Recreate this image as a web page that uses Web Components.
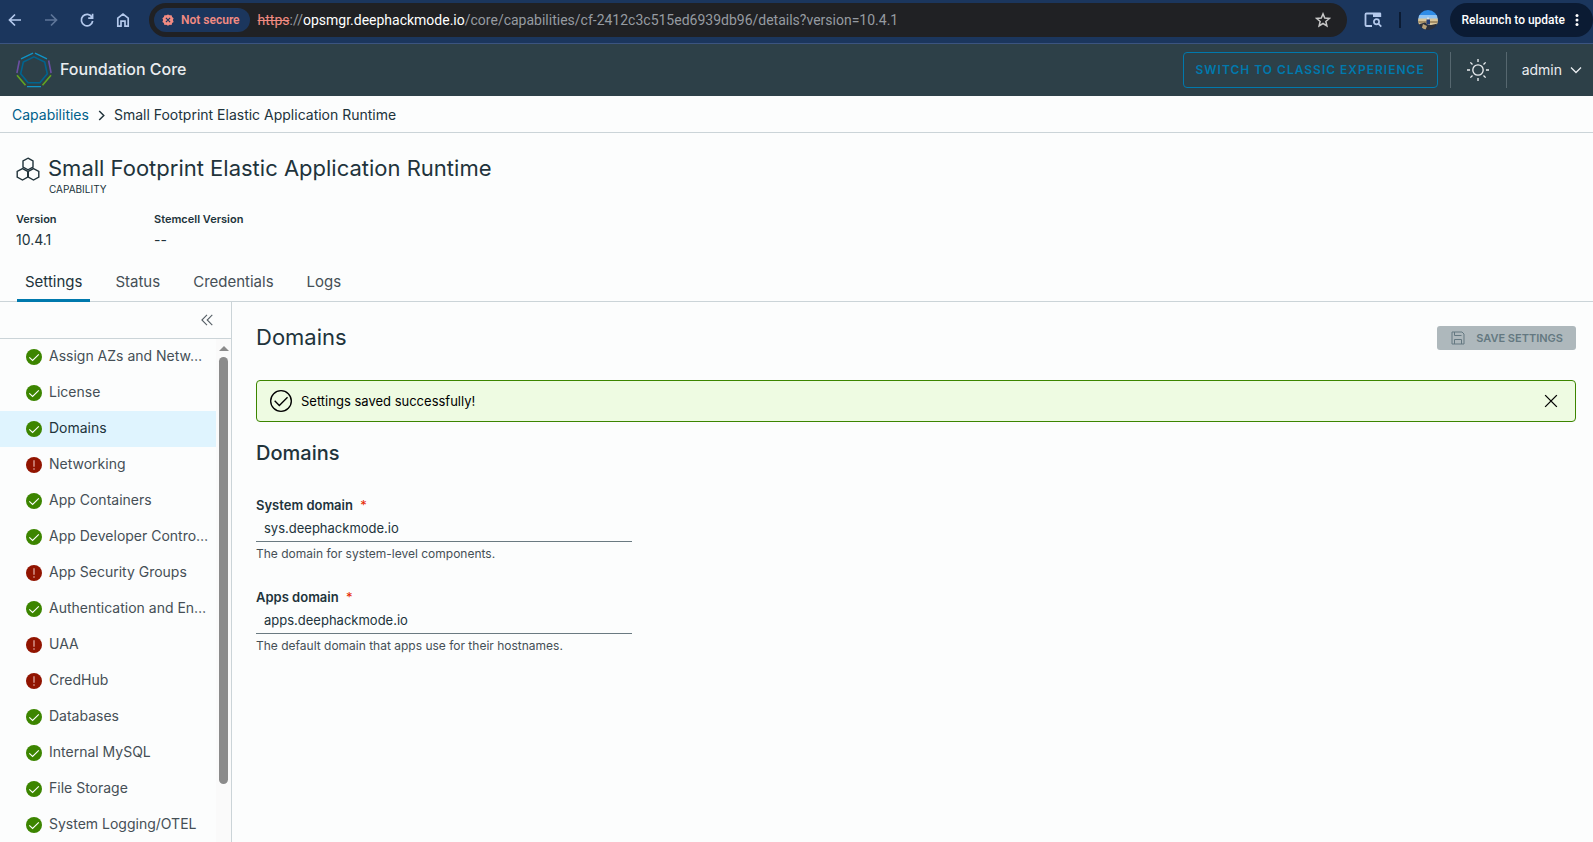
<!DOCTYPE html>
<html lang="en">
<head>
<meta charset="utf-8">
<title>Foundation Core</title>
<style>
  html, body {
    height: 100%;
  }
  body {
    margin: 0;
    overflow: hidden;
    background: #fcfdfd;
    color: #21333b;
    font: 14px/20px Inter, "Liberation Sans", sans-serif;
    --line: #cbd4d8;
    --blue: #0079ad;
    --muted: #454f56;
  }
</style>
</head>
<body>
<app-shell>
  <browser-bar slot="top"></browser-bar>
  <app-header slot="top" user="admin">Foundation Core</app-header>
  <crumb-trail slot="top" parent="Capabilities">Small Footprint Elastic Application Runtime</crumb-trail>
  <page-title slot="top" kind="CAPABILITY" version="10.4.1" stemcell="--">Small Footprint Elastic Application Runtime</page-title>
  <tab-bar slot="top" tabs="Settings,Status,Credentials,Logs" selected="Settings"></tab-bar>

  <side-nav slot="side">
    <nav-item status="ok">Assign AZs and Netw…</nav-item>
    <nav-item status="ok">License</nav-item>
    <nav-item status="ok" active>Domains</nav-item>
    <nav-item status="error">Networking</nav-item>
    <nav-item status="ok">App Containers</nav-item>
    <nav-item status="ok">App Developer Contro…</nav-item>
    <nav-item status="error">App Security Groups</nav-item>
    <nav-item status="ok">Authentication and En…</nav-item>
    <nav-item status="error">UAA</nav-item>
    <nav-item status="error">CredHub</nav-item>
    <nav-item status="ok">Databases</nav-item>
    <nav-item status="ok">Internal MySQL</nav-item>
    <nav-item status="ok">File Storage</nav-item>
    <nav-item status="ok">System Logging/OTEL</nav-item>
  </side-nav>

  <settings-form heading="Domains">
    <alert-box slot="alert">Settings saved successfully!</alert-box>
    <domain-field label="System domain" value="sys.deephackmode.io">The domain for system-level components.</domain-field>
    <domain-field label="Apps domain" value="apps.deephackmode.io">The default domain that apps use for their hostnames.</domain-field>
  </settings-form>
</app-shell>

<script>
const stroke = (d, width = 2) =>
  `<path d="${d}" fill="none" stroke="currentColor" stroke-width="${width}"/>`;

// name: [viewBox, markup]
const icons = {
  back: ["0 0 16 16", stroke("M14 8H3M8 2.5 2.5 8 8 13.5", 1.7)],
  forward: ["0 0 16 16", stroke("M2 8h11M8 2.5 13.5 8 8 13.5", 1.7)],
  reload: ["0 0 16 16", stroke("M13 5.2A5.7 5.7 0 1 0 13.7 9M13.6 1.8v4.4H9.2", 1.7)],
  home: ["0 0 16 16", stroke("M2.8 6.2 8 2l5.2 4.2V14.2H10V9.2H6v5H2.8Z", 1.7)],
  insecure: ["0 0 16 16", `<path fill="currentColor" d="m8 .5 2.200 1.300 2.600-.2.700 2.500 2 1.700-1 2.300 1 2.500-2 1.500-.7 2.500-2.600-.2L8 15.500l-2.200-1.100-2.600.2-.7-2.500-2-1.500 1-2.500-1-2.300 2-1.700.7-2.500 2.600.2z"/><path d="m5.200 5.200 5.600 5.600m0-5.600-5.600 5.600" stroke="#1b365d" stroke-width="1.600"/>`],
  star: ["0 0 16 16", stroke("m8 1.900 1.750 4.200 4.550.35-3.450 3 1.050 4.400L8 11.500l-3.900 2.350 1.050-4.400-3.450-3 4.550-.35Z", 1.5)],
  tabsearch: ["0 0 18 18", stroke("M8 15H2.500Q1.500 15 1.500 14V3.500Q1.500 2.500 2.500 2.500H9", 1.8) +
    `<path fill="currentColor" d="M9 1.600h7q1.200 0 1.200 1.200V6H9z"/><circle cx="12.500" cy="10.800" r="2.600" fill="none" stroke="currentColor" stroke-width="1.700"/>` + stroke("m14.300 12.600 3 3", 1.7)],
  dots: ["0 0 4 16", `<g fill="currentColor"><circle cx="2" cy="3.500" r="1.500"/><circle cx="2" cy="8" r="1.500"/><circle cx="2" cy="12.500" r="1.500"/></g>`],
  avatar: ["0 0 20 20", `<defs><clipPath id="c"><circle cx="10" cy="10" r="10"/></clipPath></defs>
    <g clip-path="url(#c)"><path fill="#2f8de8" d="M0 0h20v6H0z"/><path fill="#8fc4f4" d="M0 5h20v4H0z"/><path fill="#d9c59a" d="M0 8.500h20V15H0z"/>
    <path fill="#a58e66" d="M0 11h20v2H0z"/><path fill="#2b2f3a" d="M0 14.500l7-2 4 3 9-2v8H0z"/><path fill="#b8a078" d="m5 14 4 2-2 5H3z"/><path fill="#d6dfe8" d="M9 7.500h2v2H9z"/><path fill="#243d74" d="M8.500 9.500h3.500v5H8.500z"/></g>`],
  logo: ["0 0 36 36", `<g fill="none" stroke-width="1.300">
    <path stroke="#0f94c8" d="M5 6.800 17 1.200M19 1.200 31 6.800M11 34.600h14"/>
    <path stroke="#6b4fa3" stroke-width="1.600" d="M3.400 8.500.9 21M32.600 8.500 35.100 21"/>
    <path stroke="#62a420" stroke-width="1.600" d="m1 23.200 8.500 10M35 23.200l-8.500 10"/>
    <path stroke="#00648f" stroke-width="1.600" d="m18 4.900 10.700 5.200 2.600 11.700-7.400 9H12.100L4.700 21.800 7.300 10.100Z"/></g>`],
  sun: ["0 0 36 36", `<circle cx="18" cy="18" r="8.500" fill="none" stroke="currentColor" stroke-width="2.200"/>` +
    stroke("M18 0v5M18 31v5M0 18h5M31 18h5M5.500 5.500 9 9M27 27l3.500 3.500M5.500 30.500 9 27M27 9l3.500-3.500", 2.2)],
  down: ["0 0 12 12", stroke("M1 3.500 6 8.500 11 3.500", 1.3)],
  right: ["0 0 12 12", stroke("M3.500 1 8.500 6 3.500 11", 1.6)],
  collapse: ["0 0 12 12", stroke("M6 .8.900 6 6 11.200M11.300.8 6.200 6l5.100 5.200", 1.1)],
  tiles: ["0 0 24 24", stroke("M12 1.200 17 4v6l-5 2.800L7 10V4ZM6.500 11.600 11.700 14.500v5.600L6.500 23 1.200 20.100v-5.600ZM17.500 11.600l5.300 2.900v5.600L17.500 23l-5.200-2.900v-5.600Z", 1.4)],
  ok: ["0 0 16 16", `<circle cx="8" cy="8" r="8" fill="#3c8500"/><path d="m3.300 8.300 3.300 3.200 6.200-6.200" fill="none" stroke="#fff" stroke-width="1.100"/>`],
  error: ["0 0 16 16", `<circle cx="8" cy="8" r="8" fill="#911400"/><path d="M7.300 3.200h1.400v6.600H7.300zM7.300 11.300h1.400v1.400H7.300z" fill="#d89c92"/>`],
  check: ["0 0 36 36", `<circle cx="18" cy="18" r="15.500" fill="none" stroke="currentColor" stroke-width="2"/>` + stroke("m8.500 17.700 7 7L27.800 12.500")],
  close: ["0 0 16 16", stroke("M1.300 1.300 14.700 14.700M14.700 1.300 1.300 14.700", 1.5)],
  save: ["0 0 16 16", stroke("M2 2h10l2 2v10H2ZM4.500 14V9.500h7V14M4.500 2v3.500h7", 1)],
};

customElements.define(
  "app-icon",
  class AppIcon extends HTMLElement {
    connectedCallback() {
      const [box, markup] = icons[this.getAttribute("name")];
      const size = this.getAttribute("size") || 16;
      this.attachShadow({ mode: "open" }).innerHTML = `<style>
        :host { display: inline-block; flex: none; line-height: 0; }
        svg { display: block; height: ${size}px; }
      </style>
      <svg viewBox="${box}" aria-hidden="true">${markup}</svg>`;
    }
  }
);

const buttonReset = `
  button { font: inherit; color: inherit; background: none; border: 0; padding: 0; margin: 0; cursor: pointer; display: flex; align-items: center; justify-content: center; }
  * { box-sizing: border-box; }
`;

class BaseElement extends HTMLElement {
  connectedCallback() {
    this.attachShadow({ mode: "open" }).innerHTML = this.render();
  }
}

customElements.define(
  "app-shell",
  class AppShell extends BaseElement {
    render() {
      return `<style>
        :host { display: flex; flex-direction: column; height: 100vh; }
        .body { flex: 1; min-height: 0; display: grid; grid-template-columns: 232px 1fr; }
      </style>
      <slot name="top"></slot>
      <div class="body"><slot name="side"></slot><slot></slot></div>`;
    }
  }
);

customElements.define(
  "browser-bar",
  class BrowserBar extends BaseElement {
    render() {
      return `<style>${buttonReset}
        :host { display: flex; align-items: center; height: 44px; padding: 0 0 4px; box-sizing: border-box; background: #1b365d; border-bottom: 1px solid #3b5480; color: #b4c9ec; font-family: Roboto, sans-serif; }
        .nav { display: flex; gap: 20px; padding: 0 18px 0 7px; }
        .nav [disabled] { color: #5f7699; }
        .address { flex: 1; display: flex; align-items: center; height: 34px; padding: 0 16px 0 5px; border-radius: 17px; background: #202124; }
        .chip { height: 24px; padding: 0 10px 0 8px; gap: 7px; border-radius: 12px; background: #1b365d; color: #f28b82; font-size: 12px; font-weight: 600; }
        .url { flex: 1; margin-left: 8px; color: #969ba1; outline: 0; white-space: nowrap; }
        .url s { color: #f28b82; }
        .url b { color: #fff; font-weight: 400; }
        .star { color: #c7c7c7; }
        .tools { display: flex; align-items: center; padding: 0 12px 0 17px; gap: 17px; }
        hr { width: 2px; height: 16px; margin: 0; border: 0; background: #0b1b33; }
        .update { height: 34px; padding: 0 14px 0 12px; gap: 10px; border-radius: 17px; background: #0b1b33; color: #fff; font-size: 12px; font-weight: 500; }
      </style>
      <div class="nav">
        <button aria-label="Back"><app-icon name="back"></app-icon></button>
        <button aria-label="Forward" disabled><app-icon name="forward"></app-icon></button>
        <button aria-label="Reload"><app-icon name="reload"></app-icon></button>
        <button aria-label="Home"><app-icon name="home"></app-icon></button>
      </div>
      <div class="address">
        <button class="chip"><app-icon name="insecure" size="12"></app-icon>Not secure</button>
        <div class="url" role="textbox" aria-label="Address" contenteditable spellcheck="false"><s>https</s>://<b>opsmgr.deephackmode.io</b>/core/capabilities/cf-2412c3c515ed6939db96/details?version=10.4.1</div>
        <button class="star" aria-label="Bookmark"><app-icon name="star"></app-icon></button>
      </div>
      <div class="tools">
        <button aria-label="Search tabs"><app-icon name="tabsearch" size="18"></app-icon></button>
        <hr>
        <button aria-label="Profile"><app-icon name="avatar" size="20"></app-icon></button>
      </div>
      <button class="update">Relaunch to update<app-icon name="dots"></app-icon></button>`;
    }
  }
);

customElements.define(
  "app-header",
  class AppHeader extends BaseElement {
    render() {
      return `<style>${buttonReset}
        :host { display: flex; align-items: center; height: 52px; background: #2d4048; color: #eaedf0; }
        .brand { flex: 1; display: flex; align-items: center; gap: 8px; padding-left: 16px; font-size: 16px; font-weight: 500; }
        .brand span { padding-bottom: 2px; }
        .classic { height: 36px; padding: 0 12px; margin-right: 12px; border: 1px solid var(--blue); border-radius: 4px; color: var(--blue); font-size: 12px; font-weight: 600; letter-spacing: 1px; }
        .theme, .user { height: 36px; border-left: 1px solid #56676f; }
        .theme { width: 56px; }
        .user { padding: 0 11px 0 15px; gap: 8px; }
      </style>
      <div class="brand"><app-icon name="logo" size="36"></app-icon><span><slot></slot></span></div>
      <button class="classic">SWITCH TO CLASSIC EXPERIENCE</button>
      <button class="theme" aria-label="Theme"><app-icon name="sun" size="22"></app-icon></button>
      <button class="user">${this.getAttribute("user")}<app-icon name="down" size="12"></app-icon></button>`;
    }
  }
);

customElements.define(
  "crumb-trail",
  class CrumbTrail extends BaseElement {
    render() {
      return `<style>
        :host { display: flex; align-items: center; gap: 7px; height: 37px; padding: 2px 12px 0; box-sizing: border-box; border-bottom: 1px solid var(--line); }
        a { color: #00608a; text-decoration: none; }
      </style>
      <a href="#">${this.getAttribute("parent")}</a><app-icon name="right" size="11"></app-icon><slot></slot>`;
    }
  }
);

customElements.define(
  "page-title",
  class PageTitle extends BaseElement {
    render() {
      return `<style>
        :host { display: block; padding: 24px 16px 0; }
        .head { display: flex; gap: 8px; }
        h1 { margin: 0; padding-bottom: 2px; font-size: 22px; line-height: 22px; font-weight: 400; }
        .kind { padding-left: 1px; font-size: 10px; line-height: 16px; }
        dl { display: grid; grid-template-columns: 138px 1fr; margin: 12px 0 0; }
        dt { grid-row: 1; font-size: 11px; font-weight: 600; }
        dd { grid-row: 2; margin: 0; padding-bottom: 2px; line-height: 22px; }
      </style>
      <div class="head">
        <app-icon name="tiles" size="24"></app-icon>
        <div><h1><slot></slot></h1><div class="kind">${this.getAttribute("kind")}</div></div>
      </div>
      <dl>
        <dt>Version</dt><dd>${this.getAttribute("version")}</dd>
        <dt>Stemcell Version</dt><dd>${this.getAttribute("stemcell")}</dd>
      </dl>`;
    }
  }
);

customElements.define(
  "tab-bar",
  class TabBar extends BaseElement {
    render() {
      const selected = this.getAttribute("selected");
      const tabs = this.getAttribute("tabs").split(",");
      return `<style>${buttonReset}
        :host { display: flex; gap: 17px; padding: 10px 17px 0; border-bottom: 1px solid var(--line); color: var(--muted); font-size: 15px; }
        button { height: 39px; padding: 2px 8px 0; margin-bottom: -1px; border-bottom: 3px solid transparent; }
        [aria-selected="true"] { color: #21333b; border-bottom-color: var(--blue); }
      </style>
      ${tabs
        .map((t) => `<button role="tab" aria-selected="${t === selected}">${t}</button>`)
        .join("")}`;
    }
  }
);

customElements.define(
  "side-nav",
  class SideNav extends BaseElement {
    render() {
      return `<style>${buttonReset}
        :host { display: flex; flex-direction: column; min-height: 0; border-right: 1px solid var(--line); box-sizing: border-box; }
        .top { display: flex; justify-content: flex-end; height: 37px; flex: none; padding-right: 18px; border-bottom: 1px solid var(--line); color: #565f66; }
        .scroller { flex: 1; min-height: 0; display: grid; grid-template-columns: 1fr 15px; }
        nav { overflow: hidden; }
        .track { display: flex; flex-direction: column; align-items: center; background: #fafafa; padding-top: 7px; }
        .up { flex: none; border: 5px solid transparent; border-top: 0; border-bottom-color: #8b8b8b; margin-bottom: 6px; }
        .thumb { width: 9px; height: 86%; border-radius: 5px; background: #8b8b8b; }
      </style>
      <div class="top"><button aria-label="Collapse"><app-icon name="collapse" size="12"></app-icon></button></div>
      <div class="scroller">
        <nav><slot></slot></nav>
        <div class="track"><span class="up"></span><span class="thumb"></span></div>
      </div>`;
    }
  }
);

customElements.define(
  "nav-item",
  class NavItem extends BaseElement {
    render() {
      return `<style>
        :host { display: block; color: var(--muted); }
        :host([active]) { background: #dff4fe; color: #21333b; }
        a { display: flex; align-items: center; gap: 7px; height: 36px; padding-left: 26px; color: inherit; text-decoration: none; white-space: nowrap; }
        span { padding-bottom: 2px; }
      </style>
      <a href="#"><app-icon name="${this.getAttribute("status")}"></app-icon><span><slot></slot></span></a>`;
    }
  }
);

customElements.define(
  "settings-form",
  class SettingsForm extends BaseElement {
    render() {
      return `<style>${buttonReset}
        :host { display: block; padding: 24px 17px 0 24px; }
        header { display: flex; align-items: center; justify-content: space-between; margin-bottom: 30px; }
        h2 { margin: 0; padding-bottom: 2px; font-size: 22px; line-height: 22px; font-weight: 400; }
        h3 { margin: 19px 0 34px; font-size: 20px; line-height: 24px; font-weight: 500; }
        button { height: 24px; padding: 0 13px; gap: 10px; border-radius: 3px; background: #aeb8bc; color: #647881; font-size: 11px; font-weight: 600; }
      </style>
      <header><h2>${this.getAttribute("heading")}</h2>
        <button disabled><app-icon name="save" size="16"></app-icon>SAVE SETTINGS</button></header>
      <slot name="alert"></slot>
      <h3>${this.getAttribute("heading")}</h3>
      <slot></slot>`;
    }
  }
);

customElements.define(
  "alert-box",
  class AlertBox extends BaseElement {
    render() {
      return `<style>${buttonReset}
        :host { display: flex; align-items: center; height: 40px; padding: 0 17px 0 12px; gap: 8px; border: 1px solid #3c8500; border-radius: 4px; background: #eefbe2; color: #000; font-size: 13px; }
        .text { flex: 1; }
      </style>
      <app-icon name="check" size="24"></app-icon>
      <div class="text" role="status"><slot></slot></div>
      <button aria-label="Close"><app-icon name="close" size="14"></app-icon></button>`;
    }
  }
);

customElements.define(
  "domain-field",
  class DomainField extends BaseElement {
    render() {
      return `<style>
        :host { display: block; width: 376px; height: 92px; font-size: 13px; }
        label { display: block; line-height: 12px; font-weight: 600; }
        label span { margin-left: 4px; color: #e62700; font-weight: 400; }
        input { display: block; width: 100%; height: 31px; box-sizing: border-box; padding: 4px 8px 0; border: 0; border-bottom: 1px solid #6a7a81; background: none; color: #21333b; font: inherit; outline: 0; }
        .help { padding-top: 2px; font-size: 12px; color: var(--muted); }
      </style>
      <label for="field">${this.getAttribute("label")} <span>*</span></label>
      <input id="field" type="text" value="${this.getAttribute("value")}" required aria-describedby="help">
      <div class="help" id="help"><slot></slot></div>`;
    }
  }
);
</script>
</body>
</html>
